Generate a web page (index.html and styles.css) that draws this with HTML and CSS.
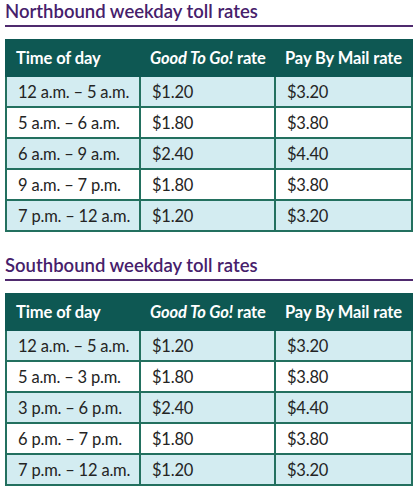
FILE: index.html
```html
<!DOCTYPE html>
<html>
<head>
<meta charset="utf-8">
<link rel="stylesheet" href="styles.css">
</head>
<body>
<div class="page">
  <section class="block">
    <h2 class="title">Northbound weekday toll rates</h2>
    <table class="rates">
      <thead>
        <tr><th>Time of day</th><th><em>Good To Go!</em> rate</th><th>Pay By Mail rate</th></tr>
      </thead>
      <tbody>
        <tr class="alt"><td>12 a.m. – 5 a.m.</td><td>$1.20</td><td>$3.20</td></tr>
        <tr><td>5 a.m. – 6 a.m.</td><td>$1.80</td><td>$3.80</td></tr>
        <tr class="alt"><td>6 a.m. – 9 a.m.</td><td>$2.40</td><td>$4.40</td></tr>
        <tr><td>9 a.m. – 7 p.m.</td><td>$1.80</td><td>$3.80</td></tr>
        <tr class="alt"><td>7 p.m. – 12 a.m.</td><td>$1.20</td><td>$3.20</td></tr>
      </tbody>
    </table>
  </section>
  <section class="block">
    <h2 class="title">Southbound weekday toll rates</h2>
    <table class="rates">
      <thead>
        <tr><th>Time of day</th><th><em>Good To Go!</em> rate</th><th>Pay By Mail rate</th></tr>
      </thead>
      <tbody>
        <tr class="alt"><td>12 a.m. – 5 a.m.</td><td>$1.20</td><td>$3.20</td></tr>
        <tr><td>5 a.m. – 3 p.m.</td><td>$1.80</td><td>$3.80</td></tr>
        <tr class="alt"><td>3 p.m. – 6 p.m.</td><td>$2.40</td><td>$4.40</td></tr>
        <tr><td>6 p.m. – 7 p.m.</td><td>$1.80</td><td>$3.80</td></tr>
        <tr class="alt"><td>7 p.m. – 12 a.m.</td><td>$1.20</td><td>$3.20</td></tr>
      </tbody>
    </table>
  </section>
</div>
</body>
</html>
```
FILE: styles.css
```css
html, body {
  margin: 0;
  padding: 0;
  background: #ffffff;
}
body {
  font-family: Lato, "Open Sans", sans-serif;
  color: #222222;
}
.page {
  width: 408px;
  padding: 0 6px 0 5px;
  display: flex;
  flex-direction: column;
  gap: 22px;
}
.block {
  display: flex;
  flex-direction: column;
  gap: 12px;
}
.title {
  margin: 0;
  font-size: 18.5px;
  font-weight: 600;
  color: #46206b;
  line-height: 22px;
  padding-top: 0;
  padding-bottom: 3px;
  border-bottom: 2px solid #4f2a6e;
}
.rates {
  width: 408px;
  border-collapse: collapse;
  table-layout: fixed;
}
.rates th, .rates td { box-sizing: border-box; }
.rates th:nth-child(1), .rates td:nth-child(1) { width: 134px; }
.rates th:nth-child(2), .rates td:nth-child(2) { width: 135px; }
.rates th {
  background: #0e5853;
  color: #ffffff;
  font-size: 16.5px;
  font-weight: 700;
  text-align: left;
  height: 36px;
  padding: 0 0 0 9px;
  border: 2px solid #0e5853;
  border-left: 1px solid #e8f2f0;
  white-space: nowrap;
  letter-spacing: -0.1px;
}
.rates th:first-child { border-left: 2px solid #0e5853; }
.rates th em { font-style: italic; }
.rates td {
  font-size: 16.5px;
  height: 31px;
  padding: 0 0 0 11px;
  border: 2px solid #23705f;
  white-space: nowrap;
  color: #242424;
  letter-spacing: -0.2px;
}
.rates tr.alt td { background: #d3ecf1; }
```
